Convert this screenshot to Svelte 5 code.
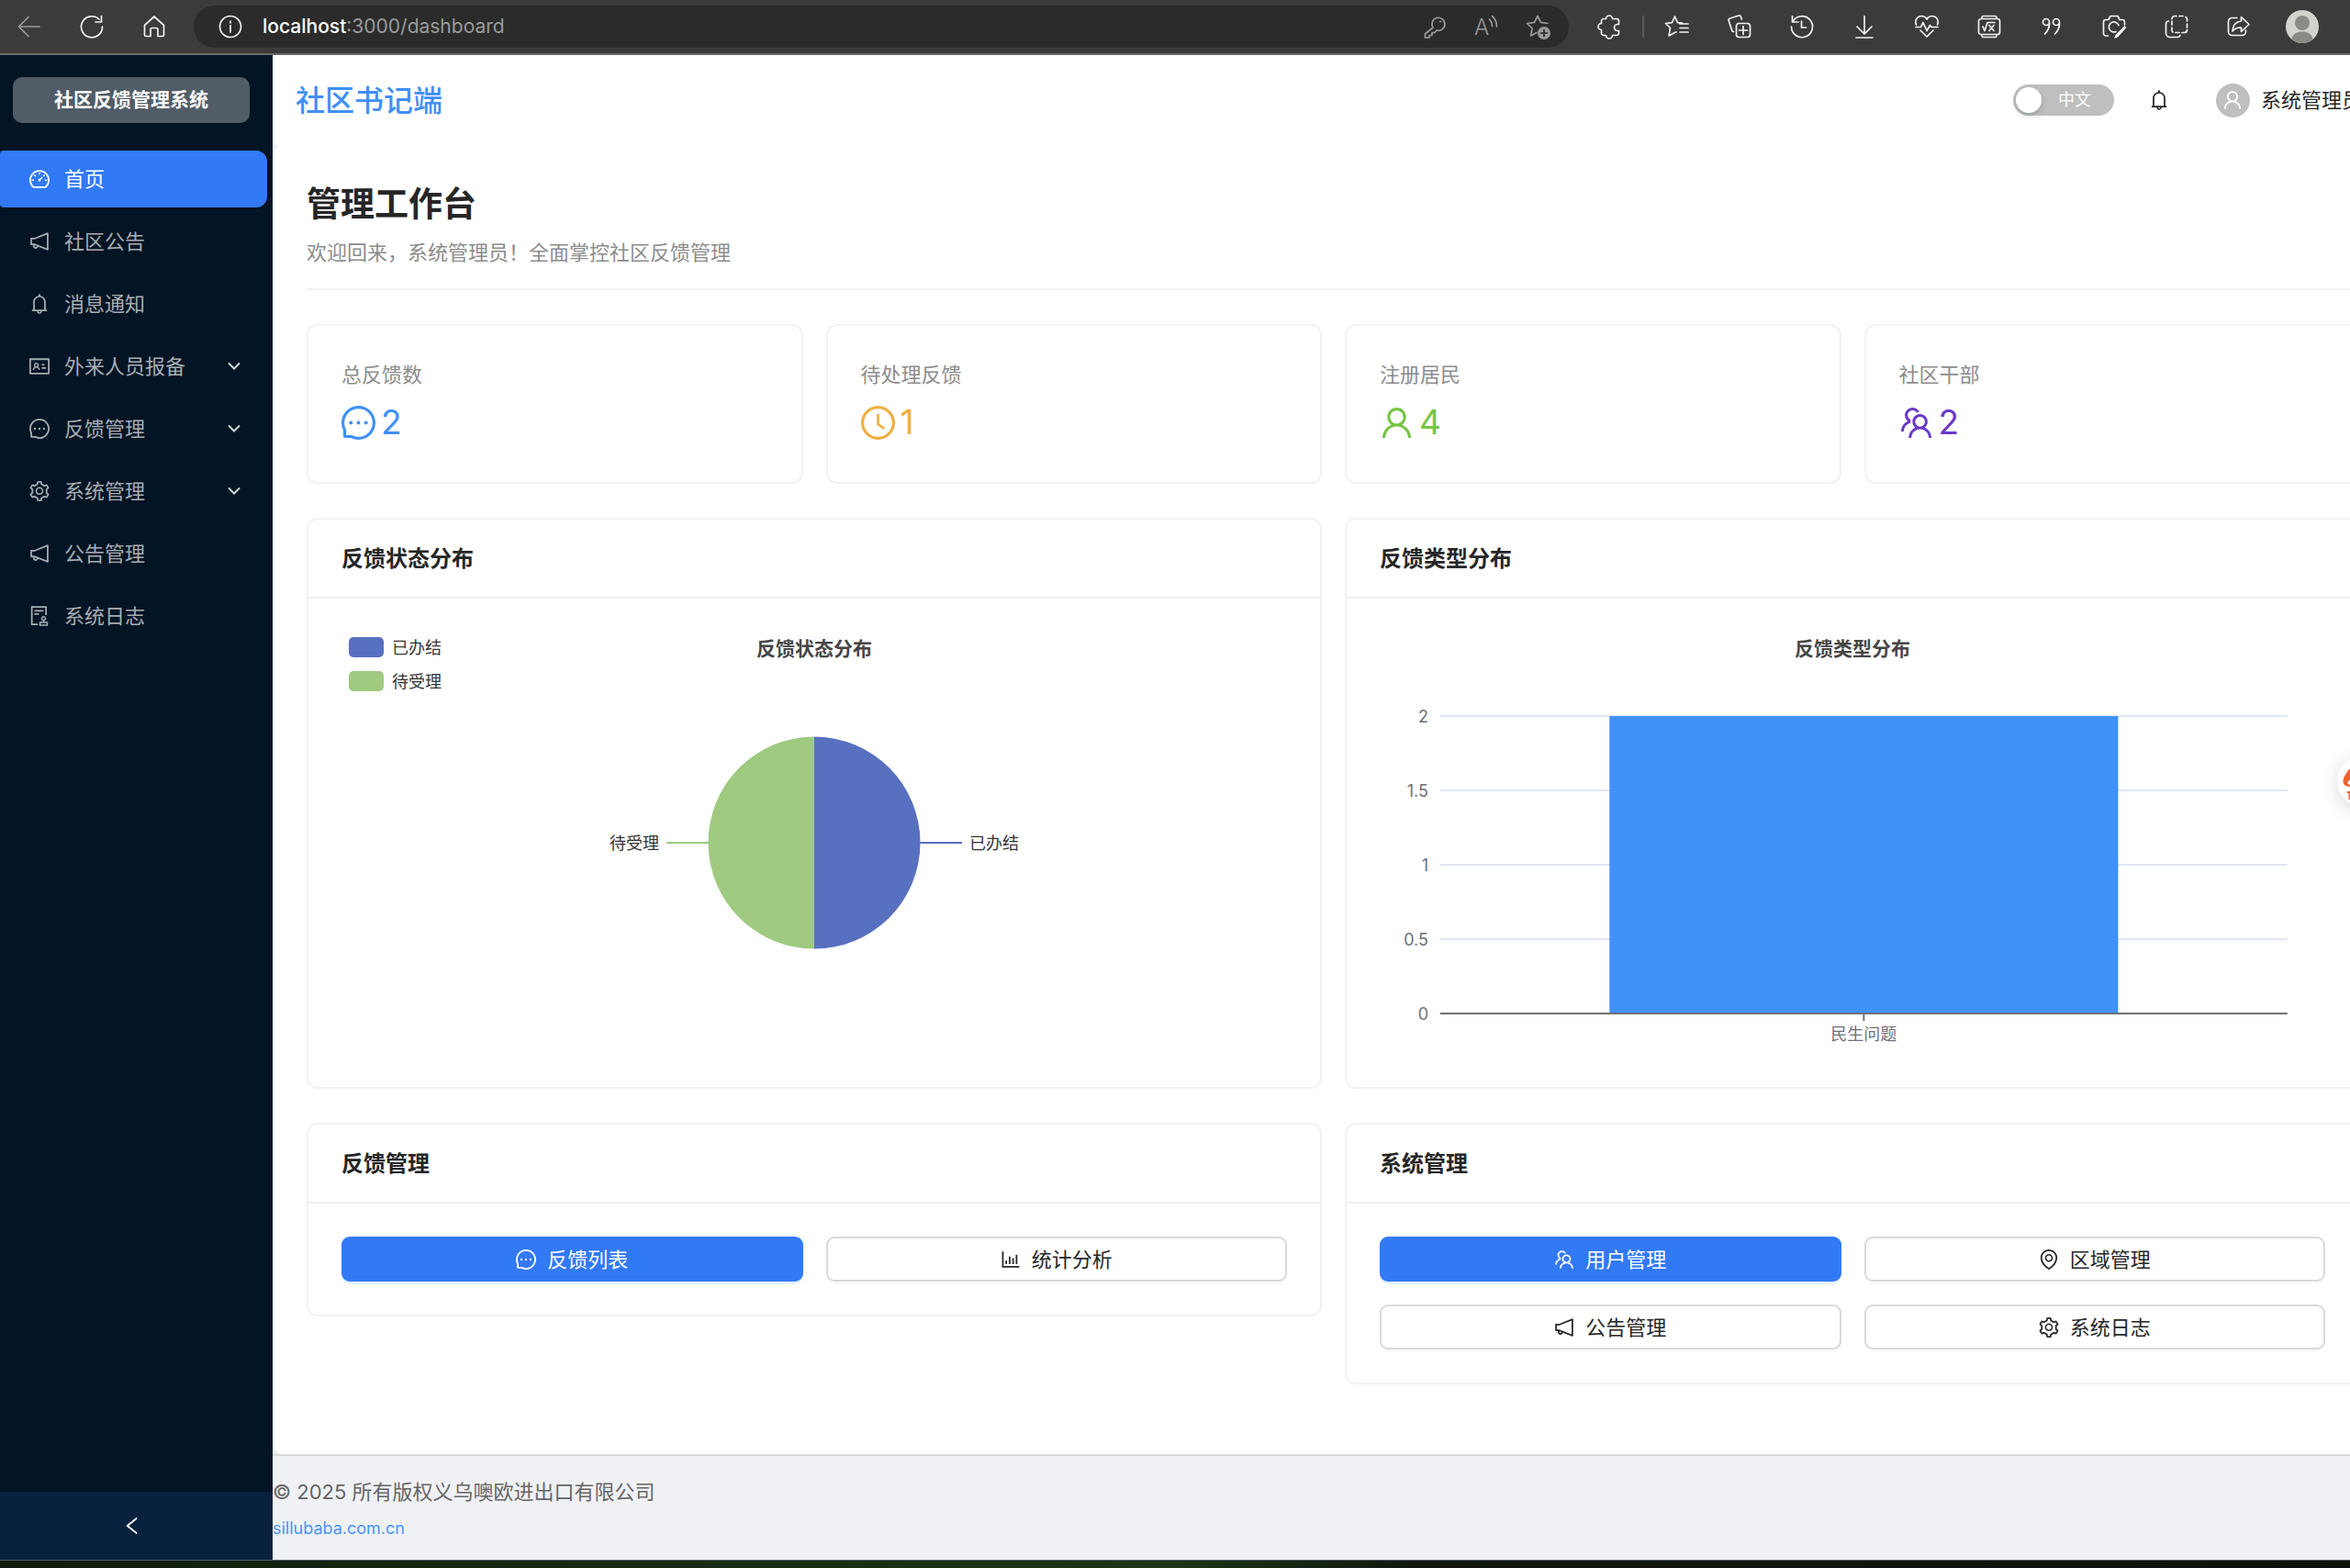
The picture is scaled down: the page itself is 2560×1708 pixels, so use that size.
<script>
    const icons = {
        dashboard: "M924.8 385.6a446.7 446.7 0 00-96-142.4 446.7 446.7 0 00-142.4-96C631.1 123.8 572.5 112 512 112s-119.1 11.8-174.4 35.2a446.7 446.7 0 00-142.4 96 446.7 446.7 0 00-96 142.4C75.8 440.9 64 499.5 64 560c0 132.7 58.3 257.7 159.9 343.1l1.7 1.4c5.8 4.8 13.1 7.5 20.6 7.5h531.7c7.5 0 14.8-2.7 20.6-7.5l1.7-1.4C901.7 817.7 960 692.7 960 560c0-60.5-11.9-119.1-35.2-174.4zM761.4 836H262.6A371.12 371.12 0 01140 560c0-99.4 38.7-192.8 109-263 70.3-70.3 163.7-109 263-109 99.4 0 192.8 38.7 263 109 70.3 70.3 109 163.7 109 263 0 105.6-44.5 205.5-122.6 276zM623.5 421.5a8.03 8.03 0 00-11.3 0L527.7 506c-18.7-5-39.4-.2-54.1 14.5a55.95 55.95 0 000 79.2 55.95 55.95 0 0079.2 0 55.87 55.87 0 0014.5-54.1l84.5-84.5c3.1-3.1 3.1-8.2 0-11.3l-28.3-28.3zM490 320h44c4.4 0 8-3.6 8-8v-80c0-4.4-3.6-8-8-8h-44c-4.4 0-8 3.6-8 8v80c0 4.4 3.6 8 8 8zm260 218v44c0 4.4 3.6 8 8 8h80c4.4 0 8-3.6 8-8v-44c0-4.4-3.6-8-8-8h-80c-4.4 0-8 3.6-8 8zm12.7-197.2l-31.1-31.1a8.03 8.03 0 00-11.3 0l-56.6 56.6a8.03 8.03 0 000 11.3l31.1 31.1c3.1 3.1 8.2 3.1 11.3 0l56.6-56.6c3.1-3.1 3.1-8.2 0-11.3zm-458.6-31.1a8.03 8.03 0 00-11.3 0l-31.1 31.1a8.03 8.03 0 000 11.3l56.6 56.6c3.1 3.1 8.2 3.1 11.3 0l31.1-31.1c3.1-3.1 3.1-8.2 0-11.3l-56.6-56.6zM262 530h-80c-4.4 0-8 3.6-8 8v44c0 4.4 3.6 8 8 8h80c4.4 0 8-3.6 8-8v-44c0-4.4-3.6-8-8-8z",
        notification: "M880 112c-3.8 0-7.7.7-11.6 2.3L292 345.9H128c-8.8 0-16 7.4-16 16.6v299c0 9.2 7.2 16.6 16 16.6h101.7c-3.7 11.6-5.7 23.9-5.7 36.4 0 65.9 53.8 119.5 120 119.5 55.4 0 102.1-37.6 115.9-88.4l408.6 164.2c3.9 1.5 7.8 2.3 11.6 2.3 16.9 0 32-14.2 32-33.2V145.2C912 126.2 897 112 880 112zM344 762.3c-26.5 0-48-21.4-48-47.8 0-11.2 3.9-21.9 11-30.4l84.9 34.1c-2 24.6-22.7 44.1-47.9 44.1zm496 58.4L318.8 611.3l-12.9-5.2H184V417.9h121.9l12.9-5.2L840 203.3v617.4z",
        bell: "M816 768h-24V428c0-141.1-104.3-257.7-240-277.1V112c0-22.1-17.9-40-40-40s-40 17.9-40 40v38.9c-135.7 19.4-240 136-240 277.1v340h-24c-17.7 0-32 14.3-32 32v32c0 4.4 3.6 8 8 8h216c0 61.8 50.2 112 112 112s112-50.2 112-112h216c4.4 0 8-3.6 8-8v-32c0-17.7-14.3-32-32-32zM512 888c-26.5 0-48-21.5-48-48h96c0 26.5-21.5 48-48 48zM304 768V428c0-55.6 21.6-107.8 60.9-147.1S456.4 220 512 220c55.6 0 107.8 21.6 147.1 60.9S720 372.4 720 428v340H304z",
        idcard: "M928 160H96c-17.7 0-32 14.3-32 32v640c0 17.7 14.3 32 32 32h832c17.7 0 32-14.3 32-32V192c0-17.7-14.3-32-32-32zm-40 632H136V232h752v560zM610.3 476h123.4c1.3 0 2.3-3.6 2.3-8v-48c0-4.4-1-8-2.3-8H610.3c-1.3 0-2.3 3.6-2.3 8v48c0 4.4 1 8 2.3 8zm4.8 144h185.7c3.9 0 7.1-3.6 7.1-8v-48c0-4.4-3.2-8-7.1-8H615.1c-3.9 0-7.1 3.6-7.1 8v48c0 4.4 3.2 8 7.1 8zM224 673h43.9c4.2 0 7.6-3.3 7.9-7.5 3.8-50.5 46-90.5 97.2-90.5s93.4 40 97.2 90.5c.3 4.2 3.7 7.5 7.9 7.5H522a8 8 0 008-8.4c-2.8-53.3-32-99.7-74.6-126.1a111.8 111.8 0 0029.1-75.5c0-61.9-49.9-112-111.4-112s-111.4 50.1-111.4 112c0 29.1 11 55.5 29.1 75.5a158.09 158.09 0 00-74.6 126.1c-.4 4.6 3.2 8.4 7.8 8.4zm149-262c28.5 0 51.7 23.3 51.7 52s-23.2 52-51.7 52-51.7-23.3-51.7-52 23.2-52 51.7-52z",
        message: "M464 512a48 48 0 1096 0 48 48 0 10-96 0zm200 0a48 48 0 1096 0 48 48 0 10-96 0zm-400 0a48 48 0 1096 0 48 48 0 10-96 0zm661.2-173.6c-22.6-53.7-55-101.9-96.3-143.3a444.35 444.35 0 00-143.3-96.3C630.6 75.7 572.2 64 512 64h-2c-60.6.3-119.3 12.3-174.5 35.9a445.35 445.35 0 00-142 96.5c-40.9 41.3-73 89.3-95.2 142.8-23 55.4-34.6 114.3-34.3 174.9A449.4 449.4 0 00112 714v152a46 46 0 0046 46h152.1A449.4 449.4 0 00510 960h2.1c59.9 0 118-11.6 172.7-34.3a444.48 444.48 0 00142.8-95.2c41.3-40.9 73.8-88.7 96.5-142 23.6-55.2 35.6-113.9 35.9-174.5.3-60.9-11.5-120-34.8-175.6zm-151.1 438C704 845.8 611 884 512 884h-1.7c-60.3-.3-120.2-15.3-173.1-43.5l-8.4-4.5H188V695.2l-4.5-8.4C155.3 633.9 140.3 574 140 513.7c-.4-99.7 37.7-193.3 107.6-263.8 69.8-70.5 163.1-109.5 262.8-109.9h1.7c50 0 98.5 9.7 144.2 28.9 44.6 18.7 84.6 45.6 119 80 34.3 34.3 61.3 74.4 80 119 19.4 46.2 29.1 95.2 28.9 145.8-.6 99.6-39.7 192.9-110.1 262.7z",
        setting: "M924.8 625.7l-65.5-56c3.1-19 4.7-38.4 4.7-57.8s-1.6-38.8-4.7-57.8l65.5-56a32.03 32.03 0 009.3-35.2l-.9-2.6a443.74 443.74 0 00-79.7-137.9l-1.8-2.1a32.12 32.12 0 00-35.1-9.5l-81.3 28.9c-30-24.6-63.5-44-99.7-57.6l-15.7-85a32.05 32.05 0 00-25.8-25.7l-2.7-.5c-52.1-9.4-106.9-9.4-159 0l-2.7.5a32.05 32.05 0 00-25.8 25.7l-15.8 85.4a351.86 351.86 0 00-99 57.4l-81.9-29.1a32 32 0 00-35.1 9.5l-1.8 2.1a446.02 446.02 0 00-79.7 137.9l-.9 2.6c-4.5 12.5-.8 26.5 9.3 35.2l66.3 56.6c-3.1 18.8-4.6 38-4.6 57.1 0 19.2 1.5 38.4 4.6 57.1L99 625.5a32.03 32.03 0 00-9.3 35.2l.9 2.6c18.1 50.4 44.9 96.9 79.7 137.9l1.8 2.1a32.12 32.12 0 0035.1 9.5l81.9-29.1c29.8 24.5 63.1 43.9 99 57.4l15.8 85.4a32.05 32.05 0 0025.8 25.7l2.7.5a449.4 449.4 0 00159 0l2.7-.5a32.05 32.05 0 0025.8-25.7l15.7-85a350 350 0 0099.7-57.6l81.3 28.9a32 32 0 0035.1-9.5l1.8-2.1c34.8-41.1 61.6-87.5 79.7-137.9l.9-2.6c4.5-12.3.8-26.3-9.3-35zM788.3 465.9c2.5 15.1 3.8 30.6 3.8 46.1s-1.3 31-3.8 46.1l-6.6 40.1 74.7 63.9a370.03 370.03 0 01-42.6 73.6L721 702.8l-31.4 25.8c-23.9 19.6-50.5 35-79.3 45.8l-38.1 14.3-17.9 97a377.5 377.5 0 01-85 0l-17.9-97.2-37.8-14.5c-28.5-10.8-55-26.2-78.7-45.7l-31.4-25.9-93.4 33.2c-17-22.9-31.2-47.6-42.6-73.6l75.5-64.5-6.5-40c-2.4-14.9-3.7-30.3-3.7-45.5 0-15.3 1.2-30.6 3.7-45.5l6.5-40-75.5-64.5c11.3-26.1 25.6-50.7 42.6-73.6l93.4 33.2 31.4-25.9c23.7-19.5 50.2-34.9 78.7-45.7l37.9-14.3 17.9-97.2c28.1-3.2 56.8-3.2 85 0l17.9 97 38.1 14.3c28.7 10.8 55.4 26.2 79.3 45.8l31.4 25.8 92.8-32.9c17 22.9 31.2 47.6 42.6 73.6L781.8 426l6.5 39.9zM512 326c-97.2 0-176 78.8-176 176s78.8 176 176 176 176-78.8 176-176-78.8-176-176-176zm79.2 255.2A111.6 111.6 0 01512 614c-29.9 0-58-11.7-79.2-32.8A111.6 111.6 0 01400 502c0-29.9 11.7-58 32.8-79.2C454 401.6 482.1 390 512 390c29.9 0 58 11.6 79.2 32.8A111.6 111.6 0 01624 502c0 29.9-11.7 58-32.8 79.2z",
        audit: "M296 250c-4.4 0-8 3.6-8 8v48c0 4.4 3.6 8 8 8h384c4.4 0 8-3.6 8-8v-48c0-4.4-3.6-8-8-8H296zm184 144H296c-4.4 0-8 3.6-8 8v48c0 4.4 3.6 8 8 8h184c4.4 0 8-3.6 8-8v-48c0-4.4-3.6-8-8-8zm-48 458H208V148h560v320c0 4.4 3.6 8 8 8h56c4.4 0 8-3.6 8-8V108c0-17.7-14.3-32-32-32H168c-17.7 0-32 14.3-32 32v784c0 17.7 14.3 32 32 32h264c4.4 0 8-3.6 8-8v-56c0-4.4-3.6-8-8-8zm440-88H728v-36.6c46.3-13.8 80-56.6 80-107.4 0-61.9-50.1-112-112-112s-112 50.1-112 112c0 50.7 33.7 93.6 80 107.4V764H520c-8.8 0-16 7.2-16 16v152c0 8.8 7.2 16 16 16h352c8.8 0 16-7.2 16-16V780c0-8.8-7.2-16-16-16zM646 620c0-27.6 22.4-50 50-50s50 22.4 50 50-22.4 50-50 50-50-22.4-50-50zm180 266H566v-60h260v60z",
        clock: "M512 64C264.6 64 64 264.6 64 512s200.6 448 448 448 448-200.6 448-448S759.4 64 512 64zm0 820c-205.4 0-372-166.6-372-372s166.6-372 372-372 372 166.6 372 372-166.6 372-372 372zM686.7 638.6L544.1 535.5V288c0-4.4-3.6-8-8-8H488c-4.4 0-8 3.6-8 8v275.4c0 2.6 1.2 5 3.3 6.5l165.4 120.6c3.6 2.6 8.6 1.8 11.2-1.7l28.6-39c2.6-3.7 1.8-8.7-1.8-11.2z",
        user: "M858.5 763.6a374 374 0 00-80.6-119.5 375.63 375.63 0 00-119.5-80.6c-.4-.2-.8-.3-1.2-.5C719.5 518 760 444.7 760 362c0-137-111-248-248-248S264 225 264 362c0 82.7 40.5 156 102.8 201.1-.4.2-.8.3-1.2.5-44.8 18.9-85 46-119.5 80.6a375.63 375.63 0 00-80.6 119.5A371.7 371.7 0 00136 901.8a8 8 0 008 8.2h60c4.4 0 7.9-3.5 8-7.8 2-77.2 33-149.5 87.8-204.3 56.7-56.7 132-87.9 212.2-87.9s155.5 31.2 212.2 87.9C779 752.7 810 825 812 902.2c.1 4.4 3.6 7.8 8 7.8h60a8 8 0 008-8.2c-1-47.8-10.9-94.3-29.5-138.2zM512 534c-45.9 0-89.1-17.9-121.6-50.4S340 407.9 340 362c0-45.9 17.9-89.1 50.4-121.6S466.1 190 512 190s89.1 17.9 121.6 50.4S684 316.1 684 362c0 45.9-17.9 89.1-50.4 121.6S557.9 534 512 534z",
        team: "M824.2 699.9a301.55 301.55 0 00-86.4-60.4C783.1 602.8 812 546.8 812 484c0-110.8-92.4-201.7-203.2-200-109.1 1.7-197 90.6-197 200 0 62.8 29 118.8 74.2 155.5a300.95 300.95 0 00-86.4 60.4C345 754.6 314 826.8 312 903.8a8 8 0 008 8.2h56c4.3 0 7.9-3.4 8-7.7 1.9-58 25.4-112.3 66.7-153.5A226.62 226.62 0 01612 684c60.9 0 118.2 23.7 161.3 66.8C814.6 792 838 846.3 840 904.3c.1 4.3 3.7 7.7 8 7.7h56a8 8 0 008-8.2c-2-77-33-149.2-87.8-203.9zM612 612c-34.2 0-66.4-13.3-90.5-37.5a126.86 126.86 0 01-37.5-91.8c.3-32.8 13.4-64.5 36.3-88 24-24.6 56.1-38.3 90.4-38.7 33.9-.3 66.8 12.9 91 36.6 24.8 24.3 38.4 56.8 38.4 91.4 0 34.2-13.3 66.3-37.5 90.5A127.3 127.3 0 01612 612zM361.5 510.4c-.9-8.7-1.4-17.5-1.4-26.4 0-15.9 1.5-31.4 4.3-46.5.7-3.6-1.2-7.3-4.5-8.8-13.6-6.1-26.1-14.5-36.9-25.1a127.54 127.54 0 01-38.7-95.4c.9-32.1 13.8-62.6 36.3-85.6 24.7-25.3 57.9-39.1 93.2-38.7 31.9.3 62.7 12.6 86 34.4 7.9 7.4 14.7 15.6 20.4 24.4 2 3.1 5.9 4.4 9.3 3.2 17.6-6.1 36.2-10.4 55.3-12.4 5.6-.6 8.8-6.6 6.3-11.6-32.5-64.3-98.9-108.7-175.7-109.9-110.9-1.7-203.3 89.2-203.3 199.9 0 62.8 28.9 118.8 74.2 155.5-31.8 14.7-61.1 35-86.5 60.4-54.8 54.7-85.8 126.9-87.8 204a8 8 0 008 8.2h56.1c4.3 0 7.9-3.4 8-7.7 1.9-58 25.4-112.3 66.7-153.5 29.4-29.4 65.4-49.8 104.7-59.7 3.9-1 6.5-4.7 6-8.7z",
        barchart: "M888 792H200V168c0-4.4-3.6-8-8-8h-56c-4.4 0-8 3.6-8 8v688c0 4.4 3.6 8 8 8h752c4.4 0 8-3.6 8-8v-56c0-4.4-3.6-8-8-8zm-600-80h56c4.4 0 8-3.6 8-8V560c0-4.4-3.6-8-8-8h-56c-4.4 0-8 3.6-8 8v144c0 4.4 3.6 8 8 8zm152 0h56c4.4 0 8-3.6 8-8V384c0-4.4-3.6-8-8-8h-56c-4.4 0-8 3.6-8 8v320c0 4.4 3.6 8 8 8zm152 0h56c4.4 0 8-3.6 8-8V462c0-4.4-3.6-8-8-8h-56c-4.4 0-8 3.6-8 8v242c0 4.4 3.6 8 8 8zm152 0h56c4.4 0 8-3.6 8-8V304c0-4.4-3.6-8-8-8h-56c-4.4 0-8 3.6-8 8v400c0 4.4 3.6 8 8 8z",
        environment: "M854.6 289.1a362.49 362.49 0 00-79.9-115.7 370.83 370.83 0 00-118.2-77.8C610.7 76.6 562.1 67 512 67c-50.1 0-98.7 9.6-144.5 28.5-44.3 18.3-84 44.5-118.2 77.8A363.6 363.6 0 00169.4 289c-19.5 45-29.4 92.8-29.4 142 0 70.6 16.9 140.9 50.1 208.7 26.7 54.5 64 107.6 111 158.1 80.3 86.2 164.5 138.9 188.4 153a43.9 43.9 0 0022.4 6.1c7.8 0 15.5-2 22.4-6.1 23.9-14.1 108.1-66.8 188.4-153 47-50.4 84.3-103.6 111-158.1C867.1 572 884 501.8 884 431.1c0-49.2-9.9-97-29.4-142zM512 880.2c-65.9-41.9-300-207.8-300-449.1 0-77.9 31.1-151.1 87.6-206.3C356.3 169.5 431.7 139 512 139s155.7 30.5 212.4 85.9C780.9 280 812 353.2 812 431.1c0 241.3-234.1 407.2-300 449.1zm0-617.2c-97.2 0-176 78.8-176 176s78.8 176 176 176 176-78.8 176-176-78.8-176-176-176zm79.2 255.2A111.6 111.6 0 01512 551c-29.9 0-58-11.7-79.2-32.8A111.6 111.6 0 01400 439c0-29.9 11.7-58 32.8-79.2A111.6 111.6 0 01512 327c29.9 0 58 11.6 79.2 32.8A111.6 111.6 0 01624 439c0 29.9-11.7 58-32.8 79.2z",
        left: "M724 218.3V141c0-6.7-7.7-10.4-12.9-6.3L260.3 486.8a31.86 31.86 0 000 50.3l450.8 352.1c5.3 4.1 12.9.4 12.9-6.3v-77.3c0-4.9-2.3-9.6-6.1-12.6l-360-281 360-281.1c3.8-3 6.1-7.7 6.1-12.6z",
    };

    // browser toolbar, stroked on a 28x28 grid
    const tools = [
        { name: "收藏夹", d: "M11.5 3l3 6.6 5 .6M11.5 3L8.400 9.600 1.500 10.500l5 5-1.400 8.500 6.400-3.400 1.500-.800M17 11h9M17 15.500h9M17 20h9" },
        { name: "集锦", d: "M7.500 19.500l-1.500-.400-3.800-11.500a2 2 0 011.400-2.600l9.500-3a2 2 0 012.500 1.400l.8 2.600M12.500 10.500h10a3 3 0 013 3v9a3 3 0 01-3 3h-9a3 3 0 01-3-3v-9a3 3 0 013-3zM18 13.500v9M13.500 18h9" },
        { name: "历史记录", d: "M3.500 2.500v6.500h6.500M4 8.500a11.500 11.500 0 11-1.500 5.500M13.500 8v7h5" },
        { name: "下载", d: "M14 2.500v19M6 14l8 8 8-8M5 26h18" },
        { name: "浏览器概要", d: "M2.500 12a6 6 0 0111.500-6 6 6 0 0111.500 6M2 14.500h5.500l2.500-5 4 9 3.500-6 1.500 2h7M7 18l7 7 7-7" },
        { name: "数学求解器", d: "M6 5.500V4a1.500 1.500 0 011.500-1.500h13A1.500 1.500 0 0122 4v1.500M5 5.500h18a2.500 2.500 0 012.500 2.500v12a2.500 2.500 0 01-2.500 2.500H5A2.500 2.500 0 012.500 20V8A2.500 2.500 0 015 5.500zM6 22.500V24a1.500 1.500 0 001.500 1.500h13A1.500 1.500 0 0022 24v-1.500M7 14l2 4.500 3-9h8M14 12.500l5 6M19 12.500l-5 6" },
        { name: "引用", d: "M11.500 9a3.500 3.500 0 10-7 0 3.500 3.500 0 107 0zc.5 5-1 9-5 13M22.500 9a3.500 3.500 0 10-7 0 3.500 3.500 0 107 0zc.5 5-1 9-5 13" },
        { name: "网页捕获", d: "M7.500 24H5a2.500 2.500 0 01-2.500-2.500V9A2.500 2.500 0 015 6.500h3l2-4h8l2 4h3A2.500 2.500 0 0125.500 9v3M16 19.500a5.500 5.500 0 113-7", fill: "M25.500 13l2 2-9.500 10.500-4 1.500 1.500-4z" },
        { name: "截图", d: "M9 5.500a3 3 0 013-3h2M17 2.500h4M24 3.500a3 3 0 011.500 2.500v2M25.500 11v4M25.500 17.500a3 3 0 01-3 3H20M17 20.500h-4M10 20a3 3 0 01-1-2.500V15M9 12V8M5.500 8A3 3 0 002.500 11v10a4.500 4.500 0 004.500 4.500h8a3 3 0 003-2" },
        { name: "分享", d: "M12 4.500H6.500a4 4 0 00-4 4v11a4 4 0 004 4h11a4 4 0 004-4V18M16.500 3.500l8.500 8-8.500 8v-4.500c-4-.2-7 1-9.500 4 .5-6.500 4-10.500 9.500-11z" },
    ];

    const menu = [
        { icon: "dashboard", text: "首页", active: true },
        { icon: "notification", text: "社区公告" },
        { icon: "bell", text: "消息通知" },
        { icon: "idcard", text: "外来人员报备", children: true },
        { icon: "message", text: "反馈管理", children: true },
        { icon: "setting", text: "系统管理", children: true },
        { icon: "notification", text: "公告管理" },
        { icon: "audit", text: "系统日志" },
    ];

    const stats = [
        { label: "总反馈数", value: 2, icon: "message", tone: "blue" },
        { label: "待处理反馈", value: 1, icon: "clock", tone: "orange" },
        { label: "注册居民", value: 4, icon: "user", tone: "green" },
        { label: "社区干部", value: 2, icon: "team", tone: "purple" },
    ];

    const statusData = [
        { name: "已办结", color: "#5870c0" },
        { name: "待受理", color: "#9fca80" },
    ];

    const ticks = [2, 1.5, 1, 0.5, 0];

    const panels = [
        {
            title: "反馈管理",
            actions: [
                { icon: "message", text: "反馈列表", primary: true },
                { icon: "barchart", text: "统计分析" },
            ],
        },
        {
            title: "系统管理",
            actions: [
                { icon: "team", text: "用户管理", primary: true },
                { icon: "environment", text: "区域管理" },
                { icon: "notification", text: "公告管理" },
                { icon: "setting", text: "系统日志" },
            ],
        },
    ];

    let english = $state(false);

    // value axis runs from y=92 (2) down to y=416 (0)
    function axisY(v) {
        return 416 - v * 162;
    }
</script>

{#snippet icon(name)}
    <svg class="icon" viewBox="64 64 896 896" aria-hidden="true"><path d={icons[name]} /></svg>
{/snippet}

{#snippet line(d, fill)}
    <svg class="line" viewBox="0 0 28 28" aria-hidden="true">
        <path {d} />
        {#if fill}<path class="solid" d={fill} />{/if}
    </svg>
{/snippet}

<div class="window">
    <div class="toolbar">
        <div class="nav">
            <button class="tool dim" aria-label="后退">{@render line("M25 14H3M13 3.500L2.500 14 13 24.500")}</button>
            <button class="tool" aria-label="刷新">{@render line("M25.500 14A11.500 11.500 0 1122 6M24.500 2.500v6.500H18")}</button>
            <button class="tool" aria-label="主页">{@render line("M3.500 12.500L14 3l10.500 9.500V23a1.500 1.500 0 01-1.500 1.500h-5V17a1.500 1.500 0 00-1.500-1.500h-5A1.500 1.500 0 0010 17v7.500H5A1.500 1.500 0 013.500 23z")}</button>
        </div>
        <div class="address">
            <button class="tool" aria-label="站点信息">{@render line("M25.500 14a11.500 11.500 0 10-23 0 11.500 11.500 0 1023 0zM14 12.500v7.500M14 8v2")}</button>
            <div class="url" contenteditable="true" role="textbox" tabindex="0" aria-label="地址"><b>localhost</b>:3000/dashboard</div>
            <div class="extras">
                <button class="tool dim" aria-label="密码">{@render line("M12 15a7 7 0 114 3l-2 2.500h-3v3H8V26H3.500v-4zM19.500 8.500h1")}</button>
                <button class="tool dim" aria-label="大声朗读">
                    <svg class="line" viewBox="0 0 28 28" aria-hidden="true">
                        <text x="1" y="23">A</text>
                        <path d="M17.500 6c2 2 3 4.500 3 7.500M20.500 2.500c3.500 3 5 7 5 11.500" />
                    </svg>
                </button>
                <button class="tool dim" aria-label="添加到收藏夹">
                    <svg class="line" viewBox="0 0 28 28" aria-hidden="true">
                        <path d="M25 10.500l-7.500-1.100L14 2.500l-3.500 6.900L2.500 10.500l5.700 5.500L6.500 24l6.500-3.500" />
                        <circle class="solid" cx="21" cy="21" r="7" />
                        <path class="plus" d="M21 17.500v7M17.500 21h7" />
                    </svg>
                </button>
            </div>
        </div>
        <button class="tool" aria-label="扩展">{@render line("M10.500 5.500a3.500 3.500 0 017 0H22A2.500 2.500 0 0124.500 8v3.500h-1.500a3.500 3.500 0 000 7h1.500V21a2.500 2.500 0 01-2.500 2.500h-4.500a3.500 3.500 0 01-7 0H8A2.500 2.500 0 015.500 21v-3.500a3.500 3.500 0 010-7V8A2.500 2.500 0 018 5.500z")}</button>
        <span class="divider"></span>
        <div class="nav">
            {#each tools as t}
                <button class="tool" aria-label={t.name}>{@render line(t.d, t.fill)}</button>
            {/each}
        </div>
        <button class="profile" aria-label="个人资料">
            <svg viewBox="0 0 36 36" aria-hidden="true">
                <circle cx="18" cy="18" r="18" fill="#d3d2ce" />
                <path d="M18 6a8 8 0 110 16 8 8 0 010-16zM6.500 31.500C7.500 26 12 23.500 18 23.500s10.500 2.500 11.500 8A18 18 0 0118 36a18 18 0 01-11.500-4.500z" fill="#8b8a87" />
            </svg>
        </button>
    </div>

    <div class="app">
        <aside>
            <div class="logo">社区反馈管理系统</div>
            <nav class="menu">
                {#each menu as m}
                    {#if m.children}
                        <button class="item" aria-expanded="false">
                            {@render icon(m.icon)}
                            <span>{m.text}</span>
                            <svg class="arrow" viewBox="0 0 14 10" aria-hidden="true"><path d="M1 1.500l6 6 6-6" /></svg>
                        </button>
                    {:else}
                        <a class="item" class:active={m.active} href="#{m.icon}">
                            {@render icon(m.icon)}
                            <span>{m.text}</span>
                        </a>
                    {/if}
                {/each}
            </nav>
            <button class="trigger" aria-label="收起菜单">{@render icon("left")}</button>
        </aside>

        <div class="main">
            <header>
                <h2>社区书记端</h2>
                <label class="switch">
                    <input type="checkbox" role="switch" bind:checked={english} />
                    <span>中文</span>
                </label>
                <button class="bell" aria-label="消息通知">{@render icon("bell")}</button>
                <button class="account">
                    <span class="avatar">{@render icon("user")}</span>
                    <span>系统管理员</span>
                </button>
            </header>

            <main>
                <div class="intro">
                    <h1>管理工作台</h1>
                    <p>欢迎回来，系统管理员！全面掌控社区反馈管理</p>
                </div>

                <div class="stats">
                    {#each stats as s}
                        <div class="card stat">
                            <div class="label">{s.label}</div>
                            <div class="value {s.tone}">
                                {@render icon(s.icon)}
                                <span>{s.value}</span>
                            </div>
                        </div>
                    {/each}
                </div>

                <div class="columns">
                    <section class="card">
                        <h3>反馈状态分布</h3>
                        <div class="body">
                            <svg class="chart" role="img" aria-label="反馈状态分布">
                                {#each statusData as s, i}
                                    <rect x="8" y={6 + i * 37} width="38" height="22" rx="5" fill={s.color} />
                                    <text x="55" y={24 + i * 37}>{s.name}</text>
                                {/each}
                                <text class="title" x="50%" y="26">反馈状态分布</text>
                                <svg x="50%" y="230" overflow="visible">
                                    <path d="M0 -115.500a115.500 115.500 0 010 231z" fill={statusData[0].color} />
                                    <path d="M0 -115.500a115.500 115.500 0 000 231z" fill={statusData[1].color} />
                                    <path d="M115 0h46" stroke={statusData[0].color} stroke-width="2" />
                                    <path d="M-115 0h-46" stroke={statusData[1].color} stroke-width="2" />
                                    <text x="169" y="7">{statusData[0].name}</text>
                                    <text class="end" x="-169" y="7">{statusData[1].name}</text>
                                </svg>
                            </svg>
                        </div>
                    </section>

                    <section class="card">
                        <h3>反馈类型分布</h3>
                        <div class="body">
                            <svg class="chart axis" role="img" aria-label="反馈类型分布">
                                <text class="title" x="50%" y="26">反馈类型分布</text>
                                {#each ticks as t}
                                    <line x1="66" x2="96%" y1={axisY(t)} y2={axisY(t)} class:base={t === 0} />
                                    <text class="end" x="53" y={axisY(t) + 7}>{t}</text>
                                {/each}
                                <rect x="24.3%" y={axisY(2)} width="53.8%" height={axisY(0) - axisY(2) - 1} fill="#4091f8" />
                                <line class="base" x1="51.200%" x2="51.200%" y1="416" y2="424" />
                                <text class="middle" x="51.200%" y="445">民生问题</text>
                            </svg>
                        </div>
                    </section>

                    {#each panels as p}
                        <section class="card">
                            <h3>{p.title}</h3>
                            <div class="body actions">
                                {#each p.actions as a}
                                    <button class="btn" class:primary={a.primary}>
                                        {@render icon(a.icon)}
                                        <span>{a.text}</span>
                                    </button>
                                {/each}
                            </div>
                        </section>
                    {/each}
                </div>
            </main>

            <footer>
                <p>© 2025 所有版权义乌噢欧进出口有限公司</p>
                <a href="http://sillubaba.com.cn">sillubaba.com.cn</a>
            </footer>
        </div>
    </div>

    <div class="desktop"></div>

    <button class="float" aria-label="助手">
        <svg viewBox="0 0 56 56" aria-hidden="true">
            <path d="M16 12c-4 4-9.500 11-9.500 16 0 4 3 6 8 6h30V12z" fill="#ee6430" />
            <path d="M15 26c-2 1-3.500 2.500-3.500 4 0 1.500 1.500 2 5.500 2z" fill="#fff" />
            <path d="M10.500 39h10v2h-5v7h-3v-7h-2z" fill="#ee6430" />
        </svg>
    </button>
</div>

<style>
    :global(body) {
        margin: 0;
    }

    .window {
        position: relative;
        display: flex;
        flex-direction: column;
        min-height: 100vh;
        overflow: hidden;
        background: #f0f1f5;
        color: #262626;
        font-family: Inter, "Noto Sans CJK SC", sans-serif;
        font-size: 22px;
        line-height: 34px;
    }

    h1,
    h2,
    h3,
    p {
        margin: 0;
    }

    button {
        border: 0;
        padding: 0;
        background: none;
        color: inherit;
        font: inherit;
        cursor: pointer;
    }

    a {
        text-decoration: none;
    }

    .icon {
        display: block;
        flex: none;
        width: 22px;
        height: 22px;
        fill: currentColor;
    }

    /* browser toolbar */
    .toolbar {
        display: flex;
        align-items: center;
        box-sizing: border-box;
        height: 60px;
        padding: 0 34px 0 18px;
        background: #3b3b3b;
        border-bottom: 2px solid #696969;
        color: #f2f2f2;
    }

    .nav {
        display: flex;
        gap: 40px;
    }

    .tool {
        flex: none;
        width: 28px;
        height: 28px;
    }

    .dim {
        color: #9a9a9a;
    }

    .line {
        display: block;
        overflow: visible;
        fill: none;
        stroke: currentColor;
        stroke-width: 1.7;
        stroke-linecap: round;
        stroke-linejoin: round;
    }

    .line .solid {
        fill: currentColor;
        stroke: none;
    }

    .line .plus {
        stroke: #2b2b2b;
    }

    .line text {
        fill: currentColor;
        stroke: none;
        font-size: 24px;
        font-weight: 300;
    }

    .address {
        flex: 1;
        display: flex;
        align-items: center;
        height: 46px;
        margin: 0 30px 0 29px;
        padding: 0 20px 0 26px;
        border-radius: 23px;
        background: #2b2b2b;
    }

    .url {
        flex: 1;
        margin-left: 21px;
        color: #9a9a9a;
        font-size: 21px;
    }

    .url b {
        color: #fff;
        font-weight: 500;
    }

    .extras {
        display: flex;
        gap: 28px;
    }

    .divider {
        width: 2px;
        height: 24px;
        margin: 0 22px;
        background: #5a5a5a;
    }

    .profile {
        width: 36px;
        height: 36px;
        margin-left: 37px;
    }

    .profile svg {
        display: block;
    }

    /* sidebar */
    .app {
        flex: 1;
        display: flex;
    }

    aside {
        flex: none;
        display: flex;
        flex-direction: column;
        width: 297px;
        background: #031424;
    }

    .logo {
        margin: 24px 25px 30px 14px;
        border-radius: 10px;
        background: #515c67;
        color: #fff;
        font-size: 21px;
        font-weight: 600;
        line-height: 50px;
        text-align: center;
    }

    .menu {
        flex: 1;
        display: flex;
        flex-direction: column;
        gap: 6px;
    }

    .item {
        display: flex;
        align-items: center;
        gap: 16px;
        height: 62px;
        margin-right: 6px;
        padding: 0 29px 0 32px;
        border-radius: 4px 12px 12px 4px;
        color: #a7adb3;
        text-align: left;
    }

    .item span {
        flex: 1;
    }

    .active {
        background: #3279f6;
        color: #fff;
    }

    .arrow {
        width: 14px;
        height: 10px;
        fill: none;
        stroke: #d0d4d8;
        stroke-width: 2;
    }

    .trigger {
        display: flex;
        align-items: center;
        justify-content: center;
        height: 74px;
        padding-right: 10px;
        background: #08213f;
        color: #fff;
    }

    /* the page is a little wider than the window and runs off its right edge */
    .main {
        flex: 1;
        display: flex;
        flex-direction: column;
        margin-right: -48px;
    }

    header {
        display: flex;
        align-items: center;
        height: 98px;
        padding: 0 35px 0 25px;
        background: #fff;
    }

    h2 {
        flex: 1;
        padding-top: 2px;
        color: #3f8ff7;
        font-size: 32px;
        font-weight: 500;
    }

    .switch {
        display: flex;
        align-items: center;
        box-sizing: border-box;
        width: 110px;
        height: 34px;
        padding: 0 3px;
        border-radius: 17px;
        background: #bfbfbf;
        color: #fff;
        font-size: 18px;
    }

    .switch input {
        appearance: none;
        width: 28px;
        height: 28px;
        margin: 0 18px 0 0;
        border-radius: 50%;
        background: #fff;
        box-shadow: 0 3px 6px rgba(0, 35, 11, 0.2);
    }

    .bell {
        margin: 0 51px 0 38px;
    }

    .account {
        display: flex;
        align-items: center;
        gap: 12px;
    }

    .avatar {
        display: flex;
        align-items: center;
        justify-content: center;
        width: 37px;
        height: 37px;
        border-radius: 50%;
        background: #bfbfbf;
        color: #fff;
    }

    main {
        flex: 1;
        padding: 37px;
        border-radius: 12px;
        background: #fff;
    }

    .intro {
        padding-bottom: 22px;
        border-bottom: 2px solid #f0f0f0;
    }

    h1 {
        padding-top: 2px;
        margin-bottom: 9px;
        font-size: 37px;
        font-weight: 600;
        line-height: 52px;
    }

    .intro p {
        color: #8c8c8c;
    }

    .stats {
        display: grid;
        grid-template-columns: repeat(4, 1fr);
        gap: 25px;
        margin: 37px 0;
    }

    .card {
        border: 2px solid #f2f2f2;
        border-radius: 12px;
        background: #fff;
    }

    .stat {
        padding: 36px;
    }

    .label {
        margin-bottom: 6px;
        color: #8c8c8c;
    }

    .value {
        display: flex;
        align-items: center;
        gap: 6px;
        font-size: 37px;
        line-height: 58px;
    }

    .value .icon {
        width: 37px;
        height: 37px;
    }

    .blue {
        color: #3f90f7;
    }

    .orange {
        color: #efaf41;
    }

    .green {
        color: #75c544;
    }

    .purple {
        color: #6c38c9;
    }

    .columns {
        display: grid;
        grid-template-columns: repeat(2, 1fr);
        align-items: start;
        gap: 37px 25px;
    }

    h3 {
        padding: 2px 36px 0;
        border-bottom: 2px solid #f0f0f0;
        font-size: 24px;
        font-weight: 600;
        line-height: 82px;
    }

    .body {
        padding: 36px;
    }

    .chart {
        display: block;
        width: 100%;
        height: 460px;
        font-size: 18px;
        fill: #333;
    }

    .chart .title {
        fill: #464646;
        font-size: 21px;
        font-weight: 600;
        text-anchor: middle;
    }

    .chart .end {
        text-anchor: end;
    }

    .chart .middle {
        text-anchor: middle;
    }

    .axis {
        fill: #6e7079;
    }

    .axis line {
        stroke: #e0e6f1;
        stroke-width: 2;
    }

    .axis .base {
        stroke: #6e7079;
    }

    .actions {
        display: grid;
        grid-template-columns: repeat(2, 1fr);
        gap: 25px;
    }

    .btn {
        display: flex;
        align-items: center;
        justify-content: center;
        gap: 12px;
        box-sizing: border-box;
        height: 49px;
        border: 2px solid #d9d9d9;
        border-radius: 9px;
        background: #fff;
        box-shadow: 0 3px 0 rgba(0, 0, 0, 0.02);
    }

    .primary {
        border-color: #3279f6;
        background: #3279f6;
        box-shadow: 0 3px 0 rgba(5, 145, 255, 0.1);
        color: #fff;
    }

    footer {
        padding: 22px 0 19px;
        border-top: 2px solid #d9d9d9;
        color: #666;
    }

    footer a {
        display: block;
        margin-top: 8px;
        color: #4a95f7;
        font-size: 18px;
        line-height: 30px;
    }

    .desktop {
        height: 8px;
        border-top: 1px solid #55606b;
        background: linear-gradient(90deg, #101c0d, #1d3418 50%, #10180e 60%, #0b120a);
    }

    .float {
        position: absolute;
        top: 823px;
        right: -42px;
        width: 56px;
        height: 56px;
        border-radius: 50%;
        background: #fff;
        box-shadow: 0 4px 20px rgba(0, 0, 0, 0.15);
    }

    .float svg {
        display: block;
    }
</style>
